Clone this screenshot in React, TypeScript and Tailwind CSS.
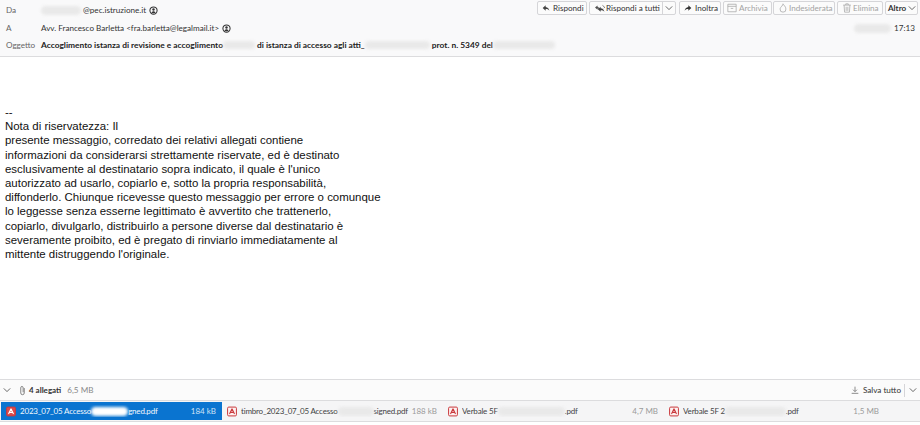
const ui = { fontFamily: 'Lato, "Open Sans", sans-serif' };

const Blob = ({ w, h = 'h-[9px]', dark }: { w: string; h?: string; dark?: boolean }) => (
  <span className={`inline-block shrink-0 align-middle rounded-full blur-[1.5px] ${w} ${h} ${dark ? 'bg-white' : 'bg-[#e9e9e9]'}`} />
);

const At = () => (
  <svg viewBox="0 0 12 12" className="w-[9px] h-[9px] ml-[3px] shrink-0">
    <circle cx="6" cy="6" r="4.8" fill="none" stroke="#333" strokeWidth="1.4" />
    <circle cx="6" cy="4.6" r="1.6" fill="#333" />
    <path d="M3.2 9.4c.6-1.8 1.6-2.400 2.800-2.400s2.200.6 2.800 2.400z" fill="#333" />
  </svg>
);

const Pdf = ({ selected }: { selected?: boolean }) => (
  <svg viewBox="0 0 12 12" className="w-[10px] h-[11px] shrink-0">
    <rect x="0.7" y="0.7" width="10.6" height="10.6" rx="1.4" fill={selected ? '#dc4a4c' : '#fdf1f1'} stroke="#c9393c" strokeWidth="1.2" />
    <path d="M6 2.6 3 9M6 2.6 9 9M4.2 7h3.6" fill="none" stroke={selected ? '#fff' : '#c9393c'} strokeWidth="1.3" />
  </svg>
);

const Chevron = () => (
  <svg viewBox="0 0 10 10" className="w-[8px] h-[8px] shrink-0">
    <path d="M1 3l4 4 4-4" fill="none" stroke="#444" strokeWidth="1" />
  </svg>
);

const Toolbtn = ({ children, cls, off }: { children: React.ReactNode; cls: string; off?: boolean }) => (
  <div className={`h-[14px] flex items-center border border-[#d5d5d8] rounded-[2px] bg-[#fbfbfb] text-[8.1px] ${cls} ${off ? 'text-[#a3a3a3]' : 'text-[#333]'}`}>
    {children}
  </div>
);

const ReplyIcon = () => (
  <svg viewBox="0 0 12 12" className="w-[8px] h-[8px]">
    <path d="M5.500 2 1 6l4.500 4V7.600c2.400 0 4 .6 5.500 2.400-.4-3-2.300-5.200-5.500-5.500z" fill="#444" />
  </svg>
);

const ReplyAllIcon = () => (
  <svg viewBox="0 0 16 12" className="w-[10px] h-[9px]">
    <path d="M4 1 0 4.500 4 8V6c1.200 0 2 .3 3 1.200C6.600 5 5.600 3.500 4 3.200z" fill="#555" />
    <path d="M9 3 4.500 7 9 11V8.600c2.400 0 4.500.6 6 2.400-.4-3-2.800-5.200-6-5.500z" fill="#444" />
    <path d="M12 1l3.500 3-1.500 1.500" fill="none" stroke="#555" strokeWidth="1.2" />
  </svg>
);

const ForwardIcon = () => (
  <svg viewBox="0 0 12 12" className="w-[8px] h-[8px]">
    <path d="M6.500 2 11 6l-4.500 4V7.600C4.100 7.600 2.500 8.200 1 10c.4-3 2.300-5.200 5.500-5.500z" fill="#333" />
  </svg>
);

const ArchiveIcon = () => (
  <svg viewBox="0 0 12 12" className="w-[10px] h-[10px]">
    <path d="M1 1.500h10v9H1zM1 4h10M4.500 6.500h3" fill="none" stroke="#a5a5a5" strokeWidth="0.9" />
  </svg>
);

const JunkIcon = () => (
  <svg viewBox="0 0 12 12" className="w-[10px] h-[10px]">
    <path d="M6 1c.4 1.500 3.500 3 3.500 6.200A3.500 3.500 0 0 1 6 11a3.500 3.500 0 0 1-3.500-3.800C2.500 5.500 4 5 4.500 3.500 5.200 4 5.600 2.500 6 1z" fill="none" stroke="#a5a5a5" strokeWidth="0.9" />
  </svg>
);

const TrashIcon = () => (
  <svg viewBox="0 0 12 12" className="w-[10px] h-[10px]">
    <path d="M1.500 2.500h9M4.500 2.500V1h3v1.500M2.500 2.500l.6 8.500h5.800l.6-8.500M5 4.500v5M7 4.500v5" fill="none" stroke="#a5a5a5" strokeWidth="0.9" />
  </svg>
);

const Clip = () => (
  <svg viewBox="0 0 10 14" className="w-[7px] h-[11px] block">
    <path d="M7.500 3.500v7a2.500 2.500 0 0 1-5 0V3a1.700 1.700 0 0 1 3.400 0v6.500" fill="none" stroke="#555" strokeWidth="1" />
  </svg>
);

const Attachment = ({ selected, size, children }: { selected?: boolean; size: string; children: React.ReactNode }) => (
  <div className={`w-[221px] h-[18px] flex items-center pl-[5px] pr-[6px] text-[8px] ${selected ? 'bg-[#0a74d0] text-[#f2f7fc]' : 'text-[#444]'}`}>
    <Pdf selected={selected} />
    <div className="ml-[4px] flex-1 flex items-center whitespace-nowrap overflow-hidden tracking-[-0.2px]">{children}</div>
    <span className={selected ? 'text-[#cfe3f6]' : 'text-[#9a9a9a]'}>{size}</span>
  </div>
);

const bodyLines = [
  'Nota di riservatezza: Il',
  'presente messaggio, corredato dei relativi allegati contiene',
  'informazioni da considerarsi strettamente riservate, ed è destinato',
  "esclusivamente al destinatario sopra indicato, il quale è l'unico",
  'autorizzato ad usarlo, copiarlo e, sotto la propria responsabilità,',
  'diffonderlo. Chiunque ricevesse questo messaggio per errore o comunque',
  'lo leggesse senza esserne legittimato è avvertito che trattenerlo,',
  'copiarlo, divulgarlo, distribuirlo a persone diverse dal destinatario è',
  'severamente proibito, ed è pregato di rinviarlo immediatamente al',
  "mittente distruggendo l'originale.",
];

const App = () => {
  return (
    <div className="w-[920px] h-[425px] bg-white flex flex-col overflow-hidden" style={ui}>
      <div className="h-[57px] bg-[#f9f9fa] border-b border-[#dcdcde] text-[8.13px] text-[#333] shrink-0">
        <div className="h-[19px] pt-[1px] flex items-start justify-between pr-[2px]">
          <div className="flex items-center h-[19px] pl-[6px]">
            <span className="w-[35px] text-[#666]">Da</span>
            <Blob w="w-[40px]" />
            <span className="ml-[2px]">@pec.istruzione.it</span>
            <At />
          </div>
          <div className="flex items-center gap-[2px]">
            <Toolbtn cls="w-[50px] pl-[4px] gap-[3px]"><ReplyIcon />Rispondi</Toolbtn>
            <div className="h-[14px] w-[87px] flex items-center border border-[#d5d5d8] rounded-[2px] bg-[#fbfbfb] text-[#333] text-[8.1px]">
              <div className="flex-1 flex items-center pl-[5px] gap-[1px] whitespace-nowrap"><ReplyAllIcon />Rispondi a tutti</div>
              <div className="w-[13px] h-full border-l border-[#d5d5d8] flex items-center justify-center"><Chevron /></div>
            </div>
            <Toolbtn cls="ml-[1px] w-[42px] pl-[4px] gap-[3px]"><ForwardIcon />Inoltra</Toolbtn>
            <Toolbtn cls="w-[49px] pl-[3px] gap-[2px]" off><ArchiveIcon />Archivia</Toolbtn>
            <Toolbtn cls="-ml-[1px] w-[62px] pl-[4px] gap-[1px]" off><JunkIcon />Indesiderata</Toolbtn>
            <Toolbtn cls="w-[46px] pl-[4px] gap-[1px]" off><TrashIcon />Elimina</Toolbtn>
            <Toolbtn cls="w-[33px] pl-[2px] gap-[2px]"><span className="font-bold">Altro</span><Chevron /></Toolbtn>
          </div>
        </div>
        <div className="h-[19px] flex items-center justify-between pr-[5px]">
          <div className="flex items-center pl-[6px]">
            <span className="w-[35px] text-[#666]">A</span>
            <span>Avv. Francesco Barletta &lt;fra.barletta@legalmail.it&gt;</span>
            <At />
          </div>
          <div className="flex items-center gap-[3px]">
            <Blob w="w-[37px]" />
            <span>17:13</span>
          </div>
        </div>
        <div className="h-[14px] flex items-center pl-[6px]">
          <span className="w-[35px] text-[#666]">Oggetto</span>
          <span className="font-bold text-[#222] whitespace-nowrap text-[8.4px]">Accoglimento istanza di revisione e accoglimento</span>
          <Blob w="w-[32px]" h="h-[8px]" />
          <span className="font-bold text-[#222] whitespace-nowrap ml-[2px] text-[8.4px]">di istanza di accesso agli atti_</span>
          <Blob w="w-[65px]" h="h-[8px]" />
          <span className="font-bold text-[#222] whitespace-nowrap ml-[2px] text-[8.4px]">prot. n. 5349 del</span>
          <Blob w="w-[62px]" h="h-[8px]" />
        </div>
      </div>

      <div className="flex-1 pl-[5px] pt-[48px] text-[#111] text-[11.44px] leading-[14.2px]" style={{ fontFamily: '"Liberation Sans", sans-serif' }}>
        <div>--</div>
        {bodyLines.map((line) => (
          <div key={line} className="whitespace-nowrap">{line}</div>
        ))}
      </div>

      <div className="h-[21px] border-t border-[#dcdcde] bg-[#fbfbfb] flex items-center justify-between text-[8.13px] text-[#333] shrink-0">
        <div className="flex items-center pl-[3px]">
          <Chevron />
          <span className="ml-[8px]"><Clip /></span>
          <span className="ml-[3px] font-bold text-[8px]">4 allegati</span>
          <span className="ml-[6px] text-[#888]">6,5 MB</span>
        </div>
        <div className="flex items-center pr-[3px]">
          <svg viewBox="0 0 12 12" className="w-[8px] h-[8px] mr-[4px]">
            <path d="M6 1v7M3 5.500 6 8.500l3-3M1 11h10" fill="none" stroke="#555" strokeWidth="1" />
          </svg>
          <span>Salva tutto</span>
          <div className="h-[13px] w-px bg-[#d5d5d8] ml-[3px] mr-[4px]" />
          <Chevron />
        </div>
      </div>

      <div className="h-[22px] border-y border-[#dcdcde] bg-[#f5f5f6] flex items-center pl-[1px] shrink-0">
        <Attachment selected size="184 kB">
          <span>2023_07_05 Accesso</span>
          <Blob w="w-[37px]" dark />
          <span>gned.pdf</span>
        </Attachment>
        <Attachment size="188 kB">
          <span>timbro_2023_07_05 Accesso</span>
          <Blob w="w-[36px]" />
          <span>signed.pdf</span>
        </Attachment>
        <Attachment size="4,7 MB">
          <span>Verbale 5F</span>
          <Blob w="w-[67px]" />
          <span>.pdf</span>
        </Attachment>
        <Attachment size="1,5 MB">
          <span>Verbale 5F 2</span>
          <Blob w="w-[61px]" />
          <span>.pdf</span>
        </Attachment>
      </div>
      <div className="h-[3px] shrink-0" />
    </div>
  );
};

export default App;
